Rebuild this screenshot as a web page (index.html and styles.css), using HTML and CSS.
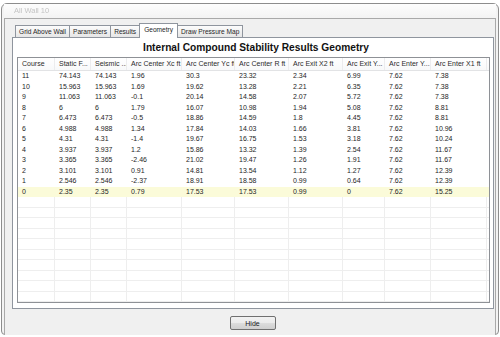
FILE: index.html
```html
<!DOCTYPE html>
<html lang="en">
  <head>
    <meta charset="UTF-8" />
    <meta name="viewport" content="width=device-width, initial-scale=1.0" />
    <title>Internal Compound Stability Results Geometry</title>
    <link rel="stylesheet" href="styles.css">
  </head>
  <body>
    <div class="window">
      <div class="titlebar">All Wall 10</div>
      <div class="client">
        <div class="tabstrip">
          <div class="tab">Grid Above Wall</div>
          <div class="tab">Parameters</div>
          <div class="tab">Results</div>
          <div class="tab active">Geometry</div>
          <div class="tab">Draw Pressure Map</div>
        </div>
        <div class="tabpage">
          <h2 class="heading">Internal Compound Stability Results Geometry</h2>
          <div class="listview" id="listview">
            <div class="lv-row lv-header">
              <div>Course</div>
              <div>Static F...</div>
              <div>Seismic ...</div>
              <div>Arc Center Xc ft</div>
              <div>Arc Center Yc ft</div>
              <div>Arc Center R ft</div>
              <div>Arc Exit X2 ft</div>
              <div>Arc Exit Y...</div>
              <div>Arc Enter Y...</div>
              <div>Arc Enter X1 ft</div>
            </div>
          </div>
        </div>
        <div class="footer">
          <button class="hide" type="button">Hide</button>
        </div>
      </div>
    </div>
    <script>
      document.addEventListener("DOMContentLoaded", () => {
        const listview = document.getElementById("listview");

        // course, static, seismic, xc, yc, r, exit x2, exit y, enter y, enter x1
        const rows = [
          ["11", "74.143", "74.143", "1.96", "30.3", "23.32", "2.34", "6.99", "7.62", "7.38"],
          ["10", "15.963", "15.963", "1.69", "19.62", "13.28", "2.21", "6.35", "7.62", "7.38"],
          ["9", "11.063", "11.063", "-0.1", "20.14", "14.58", "2.07", "5.72", "7.62", "7.38"],
          ["8", "6", "6", "1.79", "16.07", "10.98", "1.94", "5.08", "7.62", "8.81"],
          ["7", "6.473", "6.473", "-0.5", "18.86", "14.59", "1.8", "4.45", "7.62", "8.81"],
          ["6", "4.988", "4.988", "1.34", "17.84", "14.03", "1.66", "3.81", "7.62", "10.96"],
          ["5", "4.31", "4.31", "-1.4", "19.67", "16.75", "1.53", "3.18", "7.62", "10.24"],
          ["4", "3.937", "3.937", "1.2", "15.86", "13.32", "1.39", "2.54", "7.62", "11.67"],
          ["3", "3.365", "3.365", "-2.46", "21.02", "19.47", "1.26", "1.91", "7.62", "11.67"],
          ["2", "3.101", "3.101", "0.91", "14.81", "13.54", "1.12", "1.27", "7.62", "12.39"],
          ["1", "2.546", "2.546", "-2.37", "18.91", "18.58", "0.99", "0.64", "7.62", "12.39"],
          ["0", "2.35", "2.35", "0.79", "17.53", "17.53", "0.99", "0", "7.62", "15.25"],
        ];

        function addRow(cells, className) {
          const row = document.createElement("div");
          row.className = "lv-row " + className;
          cells.forEach((text) => {
            const cell = document.createElement("div");
            cell.textContent = text;
            row.appendChild(cell);
          });
          listview.appendChild(row);
        }

        rows.forEach((cells, i) => {
          addRow(cells, i === rows.length - 1 ? "selected" : "item");
        });

        // empty grid below the items
        for (let i = 0; i < 10; i++) {
          addRow(new Array(10).fill(""), "filler");
        }
      });
    </script>
  </body>
</html>
```

FILE: styles.css
```css
* {
  box-sizing: border-box;
}
body {
  margin: 0;
  background: #ffffff;
  font-family: "Liberation Sans", Arial, sans-serif;
  color: #262626;
}
.window {
  margin: 3px 1px 0;
  height: 332px;
  padding: 0 2px 2px;
  border: 1px solid #8d8d8d;
  border-radius: 6px 6px 4px 4px;
  background: #f3f3f3;
  display: flex;
  flex-direction: column;
}
.titlebar {
  height: 14px;
  padding-left: 10px;
  font-size: 7.5px;
  line-height: 14px;
  color: #c4c4c4;
  filter: blur(0.5px);
  background: linear-gradient(#fdfdfd, #f3f3f3);
}
.client {
  flex: 1;
  border: 1px solid #a9a9a9;
  background: #f0f0f0;
  display: flex;
  flex-direction: column;
}
.tabstrip {
  height: 18px;
  padding-left: 10px;
  display: flex;
  align-items: flex-end;
}
.tab {
  height: 12px;
  padding: 0 3px;
  margin-right: -1px;
  border: 1px solid #8f959e;
  border-bottom: none;
  background: linear-gradient(#fcfcfc, #e6e6e6);
  font-size: 6.6px;
  line-height: 11px;
  white-space: nowrap;
}
.tab.active {
  height: 15px;
  margin-bottom: -1px;
  padding: 0 4px;
  background: #ffffff;
  line-height: 12px;
  position: relative;
  z-index: 1;
}
.tabpage {
  flex: 1;
  margin: 0 1px 0 7px;
  border: 1px solid #8f959e;
  background: #ffffff;
  display: flex;
  flex-direction: column;
  min-height: 0;
}
.heading {
  margin: 0;
  height: 19px;
  padding-left: 6px;
  font-size: 10.2px;
  line-height: 19px;
  font-weight: bold;
  text-align: center;
  color: #111111;
}
.listview {
  flex: 1;
  margin: 0 3px 5px 4px;
  border: 1px solid #8e9196;
  overflow: hidden;
  min-height: 0;
}
.lv-row {
  display: grid;
  grid-template-columns: 37px 36px 36px 55px 53px 54px 54px 42px 46px 56px;
  height: 10.5px;
  font-size: 7px;
  line-height: 10.5px;
}
.lv-row div {
  padding-left: 4px;
  overflow: hidden;
  white-space: nowrap;
}
.lv-header {
  height: 13px;
  line-height: 12px;
  border-bottom: 1px solid #e2e3e5;
  background: linear-gradient(#ffffff, #f8f9fa);
  color: #2b2b2b;
}
.lv-header div {
  border-right: 1px solid #ececee;
}
.selected {
  background: #fbfbd9;
}
.filler {
  border-bottom: 1px solid #eeeeee;
}
.filler div {
  border-right: 1px solid #eeeeee;
}
.footer {
  height: 27px;
  padding: 7px 0 0 5px;
  display: flex;
  justify-content: center;
}
.hide {
  width: 46px;
  height: 14px;
  padding: 0;
  border: 1px solid #707070;
  border-radius: 2px;
  background: linear-gradient(#f2f2f2 0%, #ebebeb 50%, #dddddd 50%, #cfcfcf 100%);
  font-family: "Liberation Sans", Arial, sans-serif;
  font-size: 7px;
  color: #1a1a1a;
}
```
